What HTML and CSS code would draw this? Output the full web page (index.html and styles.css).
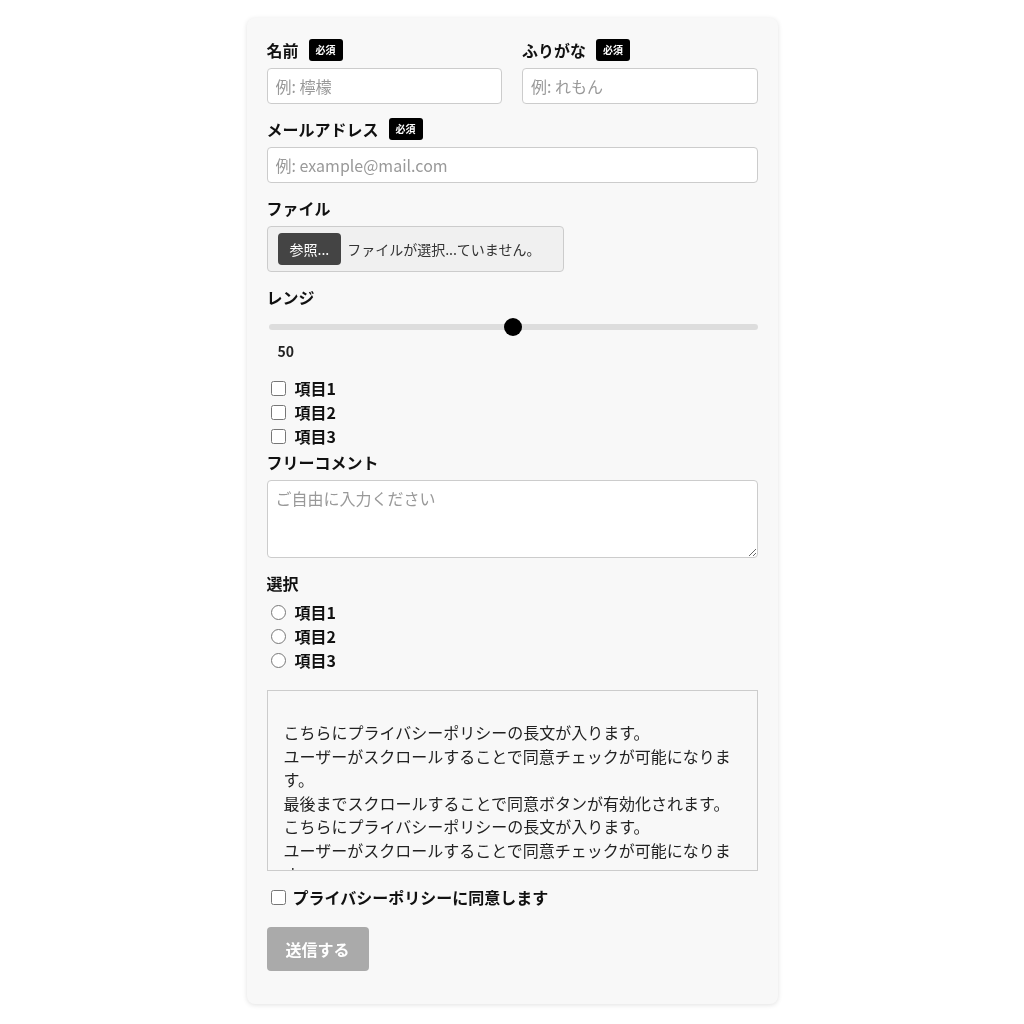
FILE: index.html
```html
<!DOCTYPE html>
<html lang="ja">

<head>
    <meta charset="utf-8">
    <title>お問い合わせフォーム</title>
    <meta name="viewport" content="width=device-width, initial-scale=1">
    <link rel="stylesheet" href="styles.css">
</head>

<body>
    <form class="card">
        <div class="form-group row">
            <div>
                <label class="label">名前 <span class="badge">必須</span></label>
                <input class="input" type="text" placeholder="例: 檸檬">
            </div>
            <div>
                <label class="label">ふりがな <span class="badge">必須</span></label>
                <input class="input" type="text" placeholder="例: れもん">
            </div>
        </div>

        <div class="form-group">
            <label class="label">メールアドレス <span class="badge">必須</span></label>
            <input class="input" type="email" placeholder="例: example@mail.com">
        </div>

        <div class="form-group">
            <label class="label">ファイル</label>
            <div class="file-box">
                <span class="file-button">参照...</span>
                <span class="file-name">ファイルが選択...ていません。</span>
            </div>
        </div>

        <div class="form-group">
            <label class="label">レンジ</label>
            <input class="range" type="range" min="0" max="100" value="50">
            <div class="range-value">50</div>
        </div>

        <div class="choice-list checks">
            <label class="choice"><input type="checkbox"><span>項目1</span></label>
            <label class="choice"><input type="checkbox"><span>項目2</span></label>
            <label class="choice"><input type="checkbox"><span>項目3</span></label>
        </div>

        <div class="form-group">
            <label class="label">フリーコメント</label>
            <textarea class="input textarea" placeholder="ご自由に入力ください"></textarea>
        </div>

        <div class="form-group">
            <label class="label label-tight">選択</label>
            <div class="choice-list">
                <label class="choice"><input type="radio" name="select"><span>項目1</span></label>
                <label class="choice"><input type="radio" name="select"><span>項目2</span></label>
                <label class="choice"><input type="radio" name="select"><span>項目3</span></label>
            </div>
        </div>

        <div class="policy">
            <p>
                こちらにプライバシーポリシーの長文が入ります。<br>
                ユーザーがスクロールすることで同意チェックが可能になります。<br>
                最後までスクロールすることで同意ボタンが有効化されます。<br>
                こちらにプライバシーポリシーの長文が入ります。<br>
                ユーザーがスクロールすることで同意チェックが可能になります。<br>
                最後までスクロールすることで同意ボタンが有効化されます。
            </p>
        </div>

        <label class="choice agree"><input type="checkbox"><span>プライバシーポリシーに同意します</span></label>

        <button class="submit" type="submit" disabled>送信する</button>
    </form>
</body>

</html>
```

FILE: styles.css
```css
body {
    font-family: "Noto Sans CJK JP", "Noto Sans", sans-serif;
    margin: 0;
    padding: 18px 0;
    background: #fff;
    color: #111;
}

.card {
    box-sizing: border-box;
    width: 531px;
    margin: 0 auto;
    padding: 20px 20px 33px;
    background: #f8f8f8;
    border-radius: 8px;
    box-shadow: 0 1px 5px rgba(0, 0, 0, 0.12);
}

.form-group {
    margin-bottom: 13px;
}

.row {
    display: grid;
    grid-template-columns: 1fr 1fr;
    gap: 20px;
}

.label {
    display: flex;
    align-items: center;
    gap: 10px;
    height: 24px;
    margin-bottom: 6px;
    font-size: 16px;
    font-weight: bold;
}

.label-tight {
    margin-bottom: 5px;
}

.badge {
    display: inline-block;
    padding: 4px 7px;
    background: #000;
    color: #fff;
    font-size: 10px;
    line-height: 14px;
    border-radius: 3px;
}

.input {
    display: block;
    box-sizing: border-box;
    width: 100%;
    height: 36px;
    padding: 0 8px;
    border: 1px solid #ccc;
    border-radius: 4px;
    background: #fff;
    font-family: inherit;
    font-size: 16px;
    color: #111;
}

.input::placeholder {
    color: #999;
}

.textarea {
    height: 78px;
    padding: 6px 8px;
    line-height: 22px;
}

/* Fake file chooser */
.file-box {
    display: inline-flex;
    align-items: center;
    gap: 6px;
    box-sizing: border-box;
    width: 297px;
    padding: 6px 10px;
    border: 1px solid #ccc;
    border-radius: 4px;
    background: #f0f0f0;
}

.file-button {
    display: inline-block;
    padding: 0 12px;
    height: 32px;
    line-height: 32px;
    background: #444;
    color: #fff;
    font-size: 14px;
    border-radius: 4px;
}

.file-name {
    font-size: 14px;
    color: #333;
}

/* Range slider */
.range {
    -webkit-appearance: none;
    appearance: none;
    display: block;
    width: 100%;
    height: 24px;
    margin: 0;
    padding: 0 0 0 2px;
    box-sizing: border-box;
    background: transparent;
}

.range::-webkit-slider-runnable-track {
    height: 6px;
    background: #ddd;
    border-radius: 3px;
}

.range::-webkit-slider-thumb {
    -webkit-appearance: none;
    width: 18px;
    height: 18px;
    margin-top: -6px;
    background: #000;
    border-radius: 50%;
}

.range-value {
    padding-left: 11px;
    font-size: 14px;
    font-weight: bold;
    line-height: 24px;
    color: #222;
}

.choice-list {
    display: flex;
    flex-direction: column;
}

.checks {
    margin-bottom: 2px;
}

.choice {
    display: flex;
    align-items: center;
    height: 24px;
    font-size: 16px;
    font-weight: bold;
}

.choice input {
    width: 15px;
    height: 15px;
    margin: 0 9px 0 4px;
}

.policy {
    box-sizing: border-box;
    height: 181px;
    margin-top: 18px;
    padding: 14px 16px;
    border: 1px solid #ccc;
    background: #f8f8f8;
    overflow-y: auto;
    scrollbar-width: none;
    font-size: 16px;
    line-height: 23.6px;
    color: #222;
}

.policy::-webkit-scrollbar {
    display: none;
}

.policy p {
    margin: 16px 0;
}

.agree {
    margin-top: 14px;
}

.agree input {
    margin-right: 7px;
}

.submit {
    display: block;
    margin-top: 18px;
    width: 102px;
    height: 44px;
    padding: 0;
    border: none;
    border-radius: 4px;
    background: #aaa;
    color: #fff;
    font-family: inherit;
    font-size: 16px;
    font-weight: bold;
}
```
